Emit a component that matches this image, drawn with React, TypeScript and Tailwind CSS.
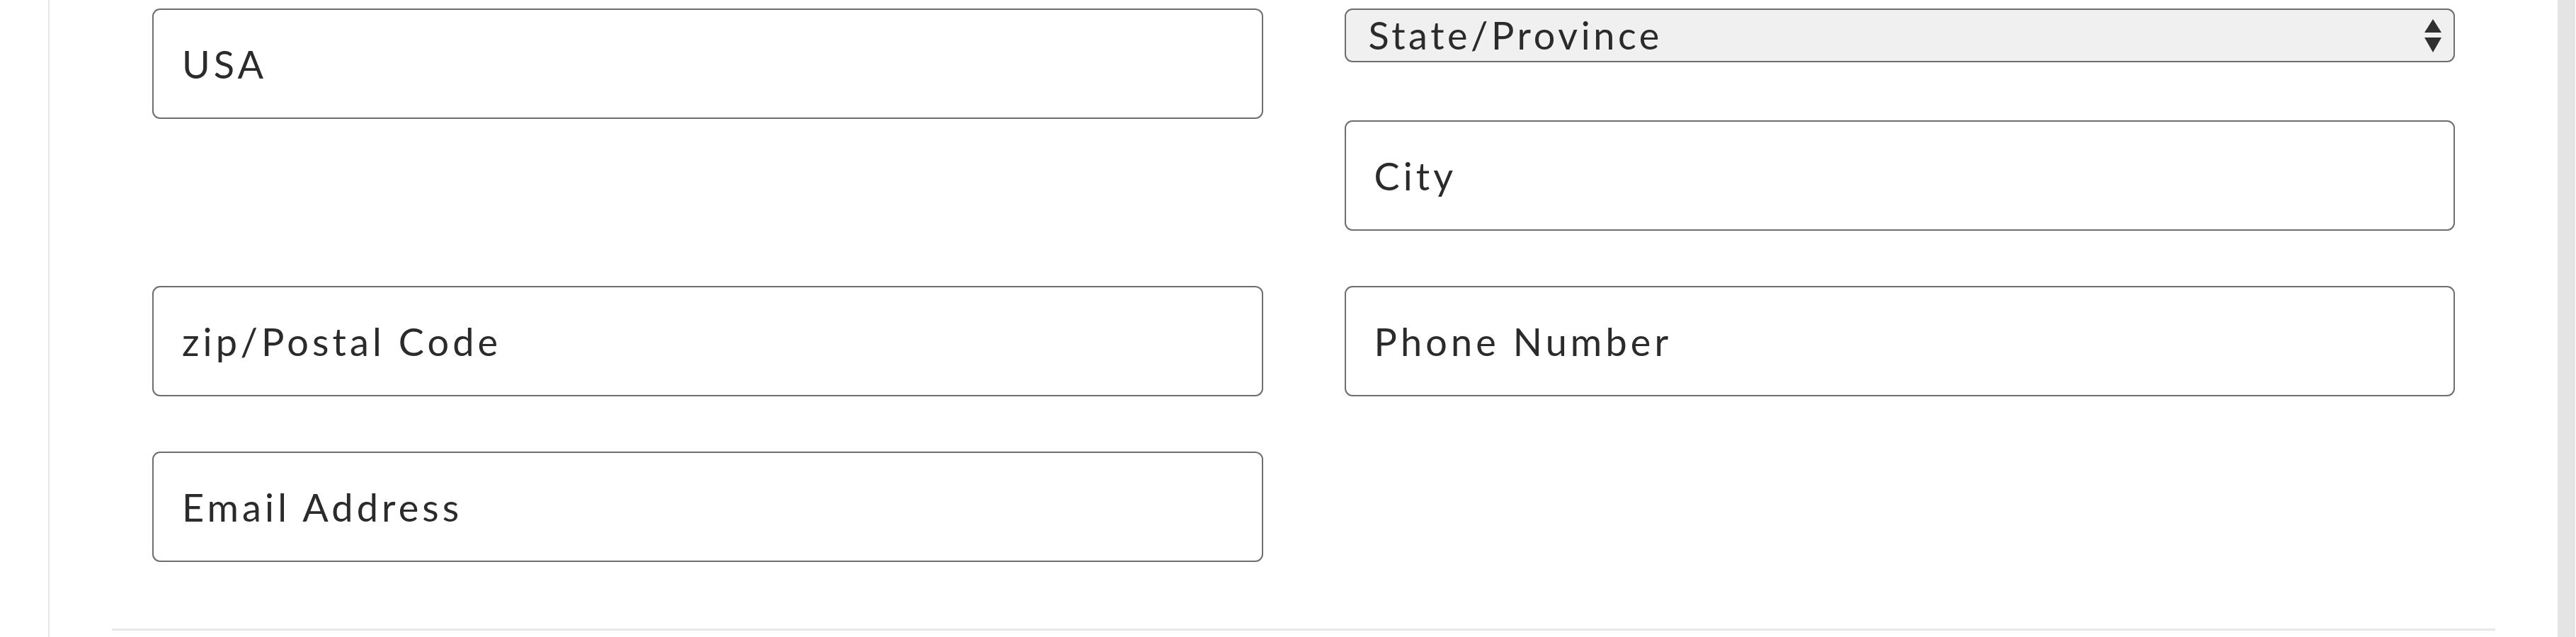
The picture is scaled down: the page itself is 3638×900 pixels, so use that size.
import React from "react";

const fieldClass =
  "block w-full h-[156px] rounded-[11px] border-2 border-[#6e6e6e] bg-white pl-[40px] pr-6 text-[54px] tracking-[0.095em] text-[#2b2b2b] placeholder:text-[#2b2b2b] outline-none [font-family:Lato,'Open_Sans',sans-serif]";

function Field({ placeholder }: { placeholder: string }) {
  return <input type="text" placeholder={placeholder} className={fieldClass} />;
}

function StateSelect() {
  return (
    <div className="relative">
      <select
        defaultValue=""
        className="block w-full h-[76px] appearance-none rounded-[11px] border-2 border-[#6e6e6e] bg-[#f0f0f0] pl-[32px] pr-16 text-[54px] leading-none tracking-[0.085em] text-[#2b2b2b] outline-none [font-family:Lato,'Open_Sans',sans-serif]"
      >
        <option value="">State/Province</option>
      </select>
      {/* native-style up/down arrows */}
      <svg
        className="pointer-events-none absolute right-[18px] top-[15px]"
        width="26"
        height="48"
        viewBox="0 0 26 48"
      >
        <path d="M13 0 L25 19 L1 19 Z" fill="#2f2f2f" />
        <path d="M1 26 L25 26 L13 47 Z" fill="#2f2f2f" />
      </svg>
    </div>
  );
}

export default function App() {
  return (
    <div className="flex h-[900px] w-full overflow-hidden bg-white">
      <div className="w-[68px] shrink-0" />

      <main className="flex flex-1 flex-col border-l-2 border-[#e6e6e6]">
        <form className="grid grid-cols-2 gap-x-[115px] gap-y-[78px] px-[145px] pt-[12px]">
          {/* row 1 */}
          <Field placeholder="USA" />
          <div className="flex flex-col gap-[82px]">
            <StateSelect />
            <Field placeholder="City" />
          </div>

          {/* row 2 */}
          <Field placeholder="zip/Postal Code" />
          <Field placeholder="Phone Number" />

          {/* row 3 */}
          <Field placeholder="Email Address" />
        </form>

        <div className="mx-[88px] mt-auto mb-[9px] h-[3px] bg-[#e8e8e8]" />
      </main>

      <div className="w-[23px] shrink-0 bg-[#e4e4e4]" />
      <div className="w-[3px] shrink-0 border-l border-[#d8d8d8] bg-[#f7f7f7]" />
    </div>
  );
}
